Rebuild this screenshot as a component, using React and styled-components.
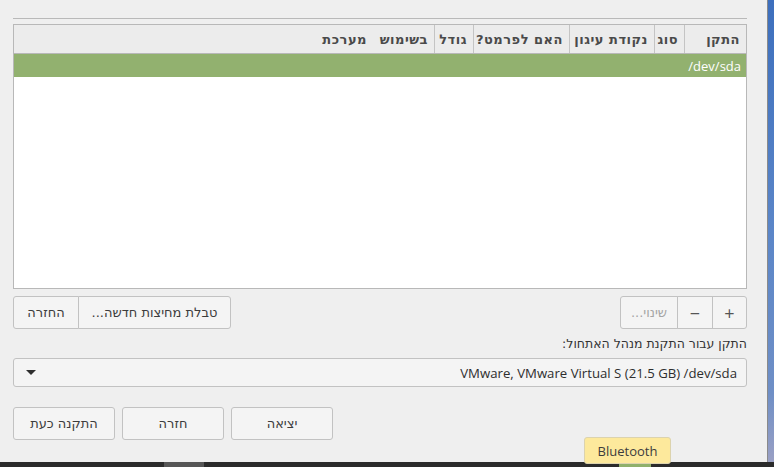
import React from "react";
import styled, { createGlobalStyle } from "styled-components";

const GlobalStyle = createGlobalStyle`
  html, body {
    margin: 0;
    padding: 0;
    background: #efefef;
    overflow: hidden;
  }
  body {
    font-family: "Open Sans", "DejaVu Sans", sans-serif;
  }
`;

const Screen = styled.div`
  position: relative;
  width: 774px;
  height: 467px;
  display: flex;
  flex-direction: column;
`;

const Desk = styled.div`
  flex: 1;
  display: flex;
`;

const Window = styled.div`
  width: 767px;
  box-sizing: border-box;
  padding: 18px 20px 0 13px;
  background: #efefef;
  display: flex;
  flex-direction: column;
  direction: rtl;
`;

const BlueEdge = styled.div`
  flex: 1;
  background: linear-gradient(180deg, #3d6fbd 0%, #5b86c8 50%, #6f8fc6 85%, #9aa0c4 100%);
  border-left: 1px solid #8a8a8a;
`;

const Taskbar = styled.div`
  height: 5px;
  background: #2b2b2b;
  position: relative;
`;

const TaskMark = styled.div`
  position: absolute;
  top: 0;
  bottom: 0;
  left: ${p => p.$left}px;
  width: ${p => p.$width}px;
  background: ${p => p.$color};
`;

const Rule = styled.div`
  height: 1px;
  background: #b9b9b9;
  margin-bottom: 5px;
`;

const Table = styled.div`
  height: 265px;
  box-sizing: border-box;
  border: 1px solid #b8b8b8;
  background: #ffffff;
  display: flex;
  flex-direction: column;
`;

const HeadRow = styled.div`
  height: 28px;
  display: flex;
  background: #ececec;
  border-bottom: 1px solid #b8b8b8;
`;

const HeadCell = styled.div`
  width: ${p => p.$w ? `${p.$w}px` : "auto"};
  flex: ${p => p.$w ? "none" : 1};
  box-sizing: border-box;
  padding: 0 6px 0 4px;
  display: flex;
  align-items: center;
  border-left: ${p => p.$sep ? "1px solid #c4c4c4" : "none"};
  font-family: "DejaVu Sans", sans-serif;
  font-weight: bold;
  font-size: 13px;
  letter-spacing: 0.5px;
  color: #4a4a4a;
  white-space: nowrap;
`;

const SelectedRow = styled.div`
  height: 23px;
  background: #92b16f;
  color: #ffffff;
  font-size: 13px;
  display: flex;
  align-items: center;
  padding: 0 5px;
`;

const ButtonsRow = styled.div`
  display: flex;
  justify-content: space-between;
  margin-top: 7px;
  height: 33px;
`;

const Group = styled.div`
  display: flex;
`;

const Btn = styled.button`
  height: 33px;
  box-sizing: border-box;
  width: ${p => p.$w}px;
  background: #f4f4f4;
  border: 1px solid #c2c2c2;
  border-radius: 3px;
  font-family: "DejaVu Sans", sans-serif;
  font-size: 13px;
  color: ${p => p.$disabled ? "#a5a5a5" : "#3c3c3c"};
  padding: 0;
  direction: rtl;
`;

const LinkedBtn = styled(Btn)`
  border-radius: 0;
  & + & {
    margin-right: -1px;
  }
  &:first-child {
    border-radius: 0 3px 3px 0;
  }
  &:last-child {
    border-radius: 3px 0 0 3px;
  }
`;

const SymbolBtn = styled(LinkedBtn)`
  font-family: "Open Sans", "DejaVu Sans", sans-serif;
  font-size: 18px;
  color: #555;
  line-height: 1;
`;

const Label = styled.div`
  margin-top: 7px;
  font-family: "DejaVu Sans", sans-serif;
  font-size: 12.5px;
  color: #333;
  height: 18px;
`;

const Combo = styled.div`
  margin-top: 4px;
  height: 29px;
  box-sizing: border-box;
  border: 1px solid #c2c2c2;
  border-radius: 3px;
  background: #f4f4f4;
  display: flex;
  align-items: center;
  justify-content: space-between;
  padding: 0 9px 0 12px;
  font-size: 13.2px;
  color: #2e2e2e;
`;

const Arrow = styled.span`
  width: 0;
  height: 0;
  border-left: 5px solid transparent;
  border-right: 5px solid transparent;
  border-top: 5px solid #2e2e2e;
`;

const Footer = styled.div`
  margin-top: 20px;
  display: flex;
  justify-content: flex-start;
  gap: 7px;
  direction: ltr;
`;

const Tooltip = styled.div`
  position: absolute;
  left: 584px;
  top: 437px;
  width: 87px;
  height: 27px;
  box-sizing: border-box;
  background: #fde99c;
  border: 1px solid #dcd3ae;
  border-radius: 3px;
  display: flex;
  align-items: center;
  justify-content: center;
  font-family: "Open Sans", "DejaVu Sans", sans-serif;
  font-size: 13px;
  color: #3c3c3c;
`;

const columns = [
  { t: "התקן", w: 62, sep: true },
  { t: "סוג", w: 30, sep: true },
  { t: "נקודת עיגון", w: 85, sep: true },
  { t: "האם לפרמט?", w: 96, sep: true },
  { t: "גודל", w: 39, sep: true },
  { t: "בשימוש", w: 61 },
  { t: "מערכת" },
];

export default function App() {
  return (
    <>
      <GlobalStyle />
      <Screen>
        <Desk>
          <Window>
            <Rule />
            <Table>
              <HeadRow>
                {columns.map(c => (
                  <HeadCell key={c.t} $w={c.w} $sep={c.sep}>{c.t}</HeadCell>
                ))}
              </HeadRow>
              <SelectedRow>
                <span dir="ltr">/dev/sda</span>
              </SelectedRow>
            </Table>
            <ButtonsRow>
              <Group>
                <SymbolBtn $w={35}>+</SymbolBtn>
                <SymbolBtn $w={36}>−</SymbolBtn>
                <LinkedBtn $w={58} $disabled>שינוי...</LinkedBtn>
              </Group>
              <Group>
                <LinkedBtn $w={153}>טבלת מחיצות חדשה...</LinkedBtn>
                <LinkedBtn $w={66}>החזרה</LinkedBtn>
              </Group>
            </ButtonsRow>
            <Label>התקן עבור התקנת מנהל האתחול:</Label>
            <Combo>
              <span dir="ltr">VMware, VMware Virtual S (21.5 GB) /dev/sda</span>
              <Arrow />
            </Combo>
            <Footer>
              <Btn $w={102}>התקנה כעת</Btn>
              <Btn $w={102}>חזרה</Btn>
              <Btn $w={102}>יציאה</Btn>
            </Footer>
          </Window>
          <BlueEdge />
        </Desk>
        <Taskbar>
          <TaskMark $left={164} $width={40} $color="#565656" />
          <TaskMark $left={619} $width={32} $color="#8fb06b" />
        </Taskbar>
        <Tooltip>Bluetooth</Tooltip>
      </Screen>
    </>
  );
}
